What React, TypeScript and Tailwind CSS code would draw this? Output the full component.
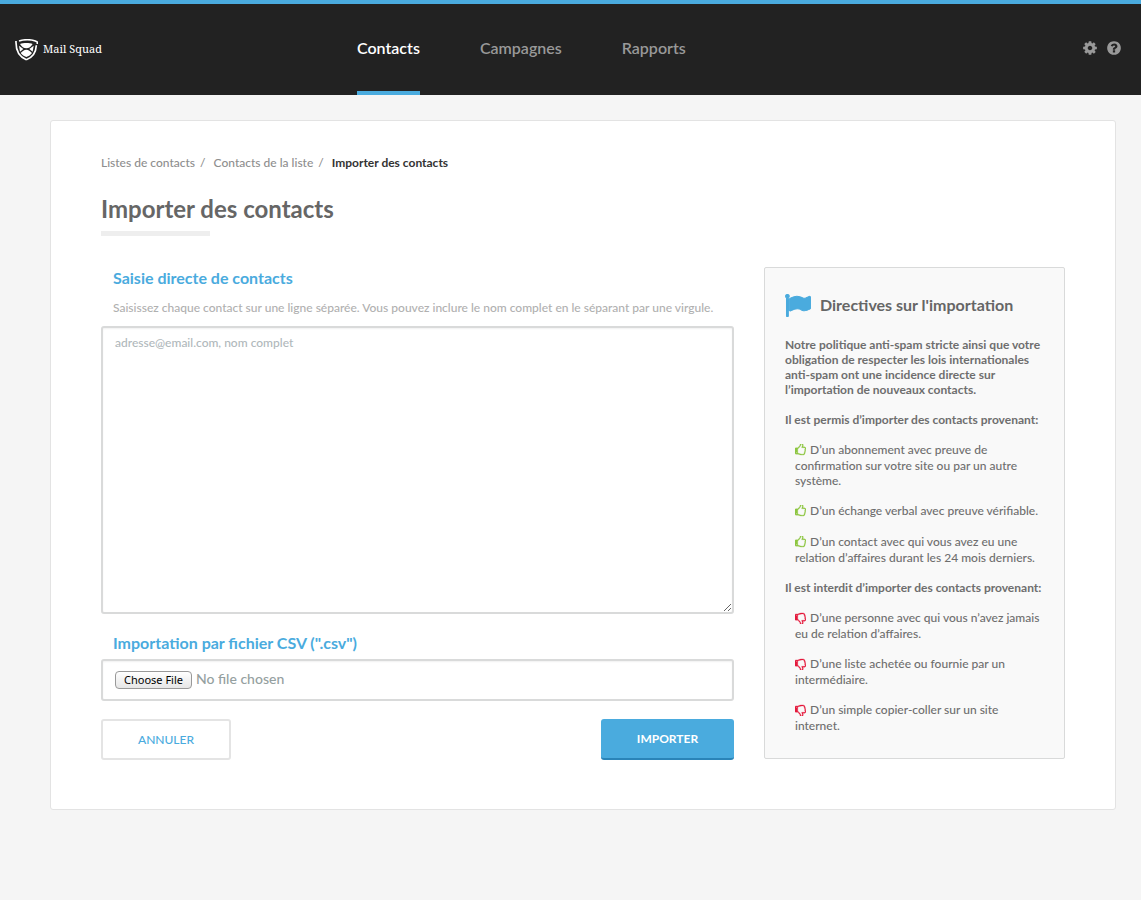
import type { ReactNode } from 'react'

const NAV = [
  { label: 'Contacts', active: true },
  { label: 'Campagnes', active: false },
  { label: 'Rapports', active: false },
]

const ALLOWED = [
  'D’un abonnement avec preuve de confirmation sur votre site ou par un autre système.',
  'D’un échange verbal avec preuve vérifiable.',
  'D’un contact avec qui vous avez eu une relation d’affaires durant les 24 mois derniers.',
]

const FORBIDDEN = [
  'D’une personne avec qui vous n’avez jamais eu de relation d’affaires.',
  'D’une liste achetée ou fournie par un intermédiaire.',
  'D’un simple copier-coller sur un site internet.',
]

const COG =
  'M1152 896q0-106-75-181t-181-75-181 75-75 181 75 181 181 75 181-75 75-181zm512-109v222q0 12-8 23t-20 13l-185 28q-19 54-39 91 35 50 107 138 10 12 10 25t-9 23q-27 37-99 108t-94 71q-12 0-26-9l-138-108q-44 23-91 38-16 136-29 186-7 28-36 28h-222q-14 0-24.500-8.500t-11.500-21.500l-28-184q-49-16-90-37l-141 107q-10 9-25 9-14 0-25-11-126-114-165-168-7-10-7-23 0-12 8-23 15-21 51-66.500t54-70.500q-27-50-41-99l-183-27q-13-2-21-12.500t-8-23.500v-222q0-12 8-23t19-13l186-28q14-46 39-92-40-57-107-138-10-12-10-24 0-10 9-23 26-36 98.500-107.500t94.500-71.500q13 0 26 10l138 107q44-23 91-38 16-136 29-186 7-28 36-28h222q14 0 24.500 8.500t11.500 21.500l28 184q49 16 90 37l142-107q9-9 24-9 13 0 25 10 129 119 165 170 7 8 7 22 0 12-8 23-15 21-51 66.500t-54 70.500q26 50 41 98l183 28q13 2 21 12.500t8 23.500z'
const HELP =
  'M1024 1376v-192q0-14-9-23t-23-9h-192q-14 0-23 9t-9 23v192q0 14 9 23t23 9h192q14 0 23-9t9-23zm256-672q0-88-55.500-163t-138.500-116-170-41q-243 0-371 213-15 24 8 42l132 100q7 6 19 6 16 0 25-12 53-68 86-92 34-24 86-24 48 0 85.500 26t37.500 59q0 38-20 61t-68 45q-63 28-115.500 86.500t-52.500 125.500v36q0 14 9 23t23 9h192q14 0 23-9t9-23q0-19 21.500-49.500t54.500-49.500q32-18 49-28.500t46-35 44.500-48 28-60.500 12.500-81zm384 192q0 209-103 385.500t-279.500 279.500-385.500 103-385.500-103-279.500-279.500-103-385.500 103-385.500 279.500-279.500 385.500-103 385.500 103 279.500 279.500 103 385.500z'
const FLAG =
  'M320 256q0 72-64 110v1266q0 13-9.500 22.500t-22.500 9.500h-64q-13 0-22.500-9.500t-9.500-22.500v-1266q-64-38-64-110 0-53 37.500-90.500t90.500-37.500 90.500 37.500 37.500 90.500zm1472 64v763q0 25-12.500 38.500t-39.500 27.500q-215 116-369 116-61 0-123.500-22t-108.500-48-115.500-48-142.500-22q-192 0-464 146-17 9-33 9-26 0-45-19t-19-45v-742q0-32 31-55 21-14 79-43 236-120 421-120 107 0 200 29t219 88q38 19 88 19 54 0 117.500-21t110-47 88-47 54.500-21q26 0 45 19t19 45z'
const THUMB =
  'M384 1344q0-26-19-45t-45-19-45 19-19 45 19 45 45 19 45-19 19-45zm1152-576q0-51-39-89.500t-89-38.500h-352q0-58 48-159.500t48-160.500q0-98-32-145t-128-47q-26 26-38 85t-30.500 125.500-59.500 109.500q-22 23-77 91-4 5-23 30t-31.500 41-34.500 42.500-40 44-38.500 35.500-40 27-35.500 9h-32v640h32q13 0 31.500 3t33 6.500 38 11 35 11.500 35.500 12.500 29 10.500q211 73 342 73h121q192 0 192-167 0-26-5-56 30-16 47.500-52.500t17.500-73.500-18-69q53-50 53-119 0-25-10-55.500t-25-47.500q32-1 53.500-47t21.500-81zm128-1q0 89-49 163 9 33 9 69 0 77-38 144 3 21 3 43 0 101-60 178 1 139-85 219.500t-227 80.500h-129q-96 0-189.500-22.500t-216.500-65.500q-116-40-138-40h-288q-53 0-90.500-37.500t-37.500-90.500v-640q0-53 37.500-90.500t90.500-37.500h274q36-24 137-155 58-75 107-128 24-25 35.500-85.500t30.500-126.500 62-108q39-37 90-37 84 0 151 32.500t102 101.500 35 186q0 93-48 192h176q104 0 180 76t76 179z'

function Glyph({ path, className, box = '0 0 1792 1792' }: { path: string; className: string; box?: string }) {
  return (
    <svg viewBox={box} fill="currentColor" aria-hidden="true" className={className}>
      <path d={path} />
    </svg>
  )
}

function Shield() {
  return (
    <svg viewBox="0 0 69 66" fill="none" aria-hidden="true" className="h-[22px] w-[23px]">
      <path d="M3 6c-1 28 8 47 31 56M64 19c-1 20-9 36-30 43" stroke="#fff" strokeWidth="5" />
      <path d="M12 6c14-5 36-5 49 0l6 3v6" stroke="#fff" strokeWidth="5" />
      <path
        d="M15 15c10-4 28-4 38 0-5 8-11 13-19 13s-14-5-19-13zM12 20l13 10-10 8zM56 20l-13 10 10 8zM17 42c6-6 10-10 17-10s11 4 17 10c-4 6-10 10-17 12-7-2-13-6-17-12z"
        fill="#fff"
      />
    </svg>
  )
}

function Rules({ items, className, icon }: { items: string[]; className: string; icon: string }) {
  return (
    <ul className="mt-[15px] flex flex-col gap-[15px] pl-[10px]">
      {items.map((text) => (
        <li key={text}>
          <span className={className}>
            <Glyph path={THUMB} box="128 128 1536 1664" className={icon} />
          </span>
          {text}
        </li>
      ))}
    </ul>
  )
}

function FieldLabel({ htmlFor, children }: { htmlFor: string; children: ReactNode }) {
  return (
    <label htmlFor={htmlFor} className="block px-3 text-[16px] leading-[22px] font-bold text-[#4aabde]">
      {children}
    </label>
  )
}

export default function App() {
  return (
    <div className="min-h-screen bg-[#f5f5f5] font-['Lato',sans-serif] text-[12px] text-[#6e6e6e]">
      <header className="grid h-[95px] grid-cols-[357px_1fr_auto] border-t-4 border-[#4aabde] bg-[#222]">
        <a href="#" className="flex items-center gap-[5px] self-center pl-[15px] font-['Noto_Serif','DejaVu_Serif_Condensed','DejaVu_Serif',serif] text-[11px] text-white">
          <Shield />
          Mail Squad
        </a>
        <nav className="flex gap-[60px] text-[16px] font-semibold">
          {NAV.map(({ label, active }) => (
            <a
              key={label}
              href="#"
              className={
                active
                  ? 'flex items-center border-b-4 border-[#4aabde] text-white'
                  : 'flex items-center border-b-4 border-transparent text-[#999]'
              }
            >
              {label}
            </a>
          ))}
        </nav>
        <div className="flex items-center gap-2 pr-[19px] pb-1 text-[#999]">
          <button type="button" aria-label="Paramètres">
            <Glyph path={COG} className="size-4" />
          </button>
          <button type="button" aria-label="Aide">
            <Glyph path={HELP} className="size-4" />
          </button>
        </div>
      </header>

      <main className="mt-[25px] mr-[25px] ml-[50px] rounded-[3px] border border-[#e3e3e3] bg-white px-[50px] pt-[33px] pb-[49px]">
        <nav className="flex gap-[5px] text-[12px] leading-[18px] font-medium text-[#8e8e8e]">
          <a href="#">Listes de contacts</a>
          <span className="mr-[3px]">/</span>
          <a href="#">Contacts de la liste</a>
          <span className="mr-[3px]">/</span>
          <span className="font-bold text-[#333]">Importer des contacts</span>
        </nav>
        <h1 className="mt-[22px] text-[24px] leading-[30px] font-bold text-[#666]">Importer des contacts</h1>
        <div className="mt-[7px] h-[5px] w-[109px] bg-[#eee]" />

        <div className="mt-[31px] flex items-start gap-[30px]">
          <form className="min-w-0 flex-1">
            <FieldLabel htmlFor="contacts">Saisie directe de contacts</FieldLabel>
            <p id="contacts-hint" className="mt-[11px] px-3 leading-4 font-medium text-[#b0b0b0]">
              Saisissez chaque contact sur une ligne séparée. Vous pouvez inclure le nom complet en le séparant par une
              virgule.
            </p>
            <textarea
              id="contacts"
              aria-describedby="contacts-hint"
              placeholder="adresse@email.com, nom complet"
              className="mt-[10px] block h-72 w-full resize rounded-[3px] border-2 border-[#d9dada] bg-white px-3 py-[6px] leading-[18px] font-medium text-[#666] shadow-[inset_0_1px_2px_rgba(0,0,0,0.06)] placeholder:text-[#b0b8bb]"
            />
            <div className="mt-[18px]">
              <FieldLabel htmlFor="csv">Importation par fichier CSV (&quot;.csv&quot;)</FieldLabel>
            </div>
            <input
              id="csv"
              type="file"
              accept=".csv"
              className="mt-[5px] block h-[42px] w-full rounded-[3px] border-2 border-[#d9dada] bg-white px-3 py-[8px] text-[14px] leading-5 font-medium text-[#95a0a0] shadow-[inset_0_1px_2px_rgba(0,0,0,0.06)] file:mr-1 file:h-[18px] file:rounded-[4px] file:border file:border-solid file:border-[#999] file:bg-linear-to-b file:from-white file:to-[#e6e6e6] file:px-2 file:font-['Noto_Sans',sans-serif] file:text-[11px] file:leading-4 file:font-normal file:text-black"
            />
            <div className="mt-[18px] flex justify-between">
              <button
                type="button"
                className="h-[41px] w-[130px] rounded-[3px] border-2 border-[#e4e4e4] bg-white text-[12px] font-medium text-[#4aabde]"
              >
                ANNULER
              </button>
              <button
                type="submit"
                className="h-[41px] w-[133px] rounded-[3px] border-b-2 border-[#2a84b8] bg-[#4aabde] text-[12px] font-bold text-white"
              >
                IMPORTER
              </button>
            </div>
          </form>

          <aside className="w-[301px] shrink-0 rounded-[2px] border border-[#d9dada] bg-[#f9f9f9] px-5 pt-[23px] pb-[25px] leading-[15px] font-medium">
            <h2 className="flex items-center gap-[9px] text-[16px] leading-7 font-bold text-[#666]">
              <Glyph
                path={FLAG}
                box="32 98 1790 1596"
                className="h-[23px] w-[26px] stroke-current stroke-[70] text-[#4aabde]"
              />
              Directives sur l&apos;importation
            </h2>
            <p className="mt-[18px] font-bold">
              Notre politique anti-spam stricte ainsi que votre obligation de respecter les lois internationales
              anti-spam ont une incidence directe sur l’importation de nouveaux contacts.
            </p>
            <p className="mt-[15px] font-bold">Il est permis d’importer des contacts provenant:</p>
            <Rules
              items={ALLOWED}
              className="mr-1 inline-block h-[14px] align-middle text-[#8cc63f]"
              icon="h-3 w-[11px] stroke-current stroke-[40]"
            />
            <p className="mt-[15px] font-bold">Il est interdit d’importer des contacts provenant:</p>
            <Rules
              items={FORBIDDEN}
              className="mr-1 inline-block h-[14px] align-middle text-[#e5193c]"
              icon="h-3 w-[11px] -scale-y-100 stroke-current stroke-[40]"
            />
          </aside>
        </div>
      </main>
    </div>
  )
}
